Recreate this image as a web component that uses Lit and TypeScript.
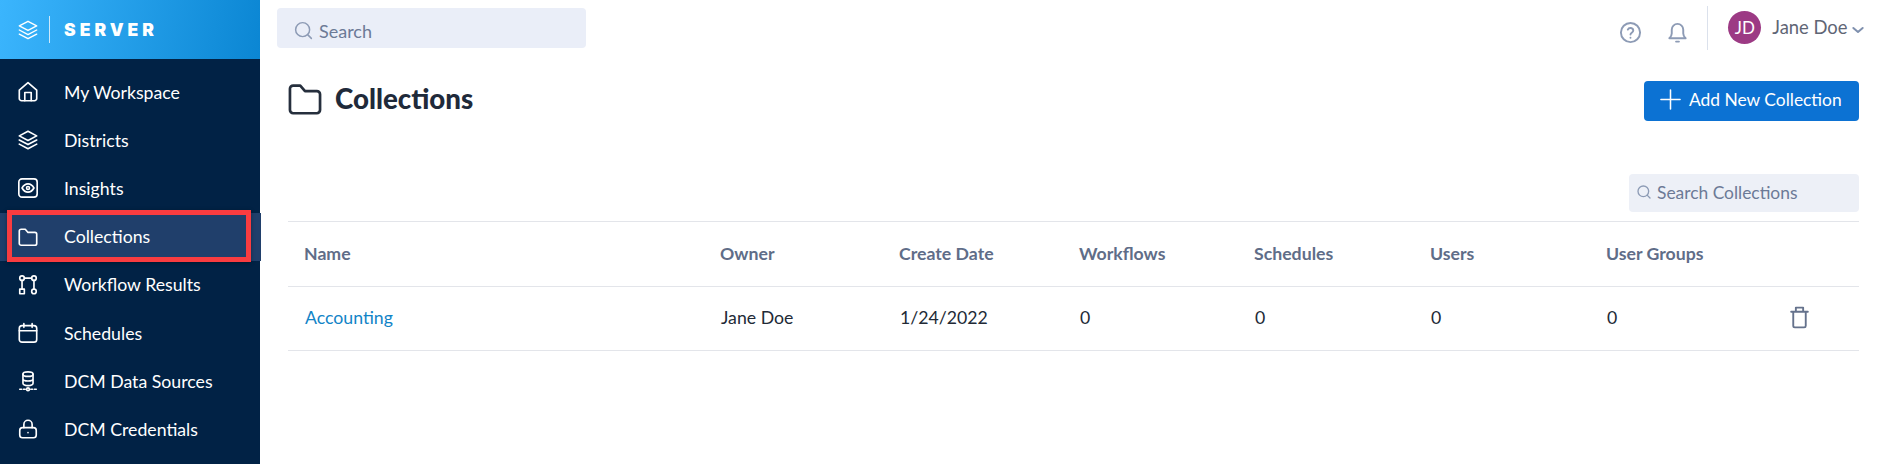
import { LitElement, html, css, svg } from 'lit';
import { customElement } from 'lit/decorators.js';

const icon = (body: unknown, size = 20, sw = 1.7) => html`<svg
  width=${size} height=${size} viewBox="0 0 24 24" fill="none" stroke="currentColor"
  stroke-width=${sw} stroke-linecap="round" stroke-linejoin="round">${body}</svg>`;

const layers = svg`<path d="M12 2.500l9.500 5-9.500 5-9.500-5z"/><path d="M2.500 12l9.500 5 9.500-5"/><path d="M2.500 16.500l9.500 5 9.500-5"/>`;
const folder = svg`<path d="M2.500 5.500a2 2 0 0 1 2-2h4.500l3 3.500h7.500a2 2 0 0 1 2 2v10a2 2 0 0 1-2 2h-15a2 2 0 0 1-2-2z"/>`;
const search = svg`<circle cx="11" cy="11" r="8"/><path d="M21 21l-4.300-4.300"/>`;

const NAV = [
  { label: 'My Workspace', icon: svg`<path d="M2.500 10L12 1.800l9.500 8.200v9a2.500 2.500 0 0 1-2.500 2.500H5A2.500 2.500 0 0 1 2.500 19z"/><path d="M8.500 21.500V12.500h7v9"/>` },
  { label: 'Districts', icon: layers },
  { label: 'Insights', icon: svg`<rect x="2" y="2" width="20" height="20" rx="3.500"/><path d="M5.500 12s2.500-4.500 6.500-4.500 6.500 4.500 6.500 4.500-2.500 4.500-6.500 4.500-6.500-4.500-6.500-4.500z"/><circle cx="12" cy="12" r="1.600"/>` },
  { label: 'Collections', icon: folder, active: true },
  { label: 'Workflow Results', icon: svg`<circle cx="5.500" cy="4.500" r="2.500"/><circle cx="18.500" cy="4.500" r="2.500"/><circle cx="18.500" cy="19" r="2.500"/><rect x="3" y="16.500" width="5" height="5"/><path d="M8 4.500h8M5.500 7v9.500M18.500 7v9.500"/>` },
  { label: 'Schedules', icon: svg`<rect x="2.500" y="4" width="19" height="18" rx="3"/><path d="M2.500 9.500h19M7.500 1.800v4M16.500 1.800v4"/>` },
  { label: 'DCM Data Sources', icon: svg`<ellipse cx="12" cy="4.500" rx="5.500" ry="2.500"/><path d="M6.500 4.500v10c0 1.400 2.500 2.500 5.500 2.500s5.500-1.100 5.500-2.500v-10M6.500 9.500c0 1.400 2.500 2.500 5.500 2.500s5.500-1.100 5.500-2.500"/><circle cx="12" cy="21" r="1.500"/><path d="M3 21h6M15 21h6" stroke-dasharray="2 2"/>` },
  { label: 'DCM Credentials', icon: svg`<rect x="3" y="10.500" width="18" height="11" rx="3"/><path d="M7.500 10.500V7a4.500 4.500 0 0 1 9 0v3.500"/><path d="M12 16v.01"/>` },
];

const COLUMNS = ['Name', 'Owner', 'Create Date', 'Workflows', 'Schedules', 'Users', 'User Groups'];

@customElement('app-root')
export class AppRoot extends LitElement {
  static styles = css`
    :host {
      display: flex;
      height: 464px;
      overflow: hidden;
      background: #fff;
      font-family: Lato, "Liberation Sans", sans-serif;
      position: relative;
    }
    svg { display: block; flex: none; }
    .side { width: 260px; flex: none; background: #012245; color: #fff; }
    .brand {
      height: 59px;
      display: flex;
      align-items: center;
      padding-left: 17px;
      background: linear-gradient(100deg, #3bb5fd 0%, #0b86d3 100%);
    }
    .brand-line { width: 1px; height: 27px; background: #cde9fb; margin: 0 14px 0 10px; }
    .brand-name {
      font-family: Inter, sans-serif;
      font-weight: 900;
      font-size: 17.500px;
      letter-spacing: 4px;
    }
    .nav { padding-top: 9px; }
    .item {
      height: 48.200px;
      display: flex;
      align-items: center;
      gap: 25px;
      padding-left: 17px;
      font-size: 17.700px;
    }
    .item.active { background: #203f6b; width: 261px; box-sizing: border-box; }
    .mark {
      position: absolute;
      left: 7px;
      top: 210px;
      width: 244px;
      height: 52px;
      box-sizing: border-box;
      border: 5px solid #f93c40;
      box-shadow: 0 1px 4px rgba(0, 0, 0, .35);
    }
    .main { flex: 1; min-width: 0; }
    .top {
      height: 56px;
      display: flex;
      align-items: center;
      padding-left: 17px;
      color: #8d9bb5;
    }
    .search {
      width: 309px;
      height: 40px;
      box-sizing: border-box;
      display: flex;
      align-items: center;
      gap: 5px;
      padding: 5px 0 0 16px;
      background: #eaeef8;
      border-radius: 4px;
      color: #6c7a96;
      font-size: 18px;
    }
    .search svg { color: #8d9bb5; margin-top: -1px; }
    .top-right {
      margin-left: auto;
      display: flex;
      align-items: center;
      padding-right: 15px;
    }
    .help { margin-top: 9px; }
    .bell { margin: 9px 0 0 24px; }
    .divider { width: 1px; height: 44px; background: #dbe1ec; margin: 0 20px 0 18px; }
    .avatar {
      width: 33px;
      height: 33px;
      border-radius: 50%;
      background: #9c3a84;
      color: #fff;
      font-size: 17px;
      display: flex;
      align-items: center;
      justify-content: center;
      margin-top: -2px;
    }
    .user { margin: -2px 0 0 11px; color: #5f6675; font-size: 18.400px; white-space: nowrap; }
    .chev { margin: 4px 0 0 2.500px; color: #7f90ae; }
    .body { padding: 25px 22px 0 28px; }
    .title-row { display: flex; align-items: center; height: 40px; }
    .title-icon { color: #262f3d; margin: -5px 0 0 -2px; }
    h1 {
      margin: -5px 0 0 11px;
      font-size: 27.700px;
      font-weight: 900;
      color: #1f2a3a;
    }
    .add {
      margin-left: auto;
      width: 215px;
      height: 40px;
      display: flex;
      align-items: center;
      gap: 7px;
      padding: 0 0 3px 15px;
      box-sizing: border-box;
      background: #0c72d3;
      color: #fff;
      border-radius: 4px;
      font-size: 17.400px;
    }
    .filter { display: flex; justify-content: flex-end; margin-top: 53px; }
    .filter div {
      width: 230px;
      height: 38px;
      box-sizing: border-box;
      display: flex;
      align-items: center;
      gap: 5px;
      padding: 0 0 2px 7px;
      background: #edf0f7;
      border-radius: 4px;
      color: #6c7a96;
      font-size: 17.400px;
    }
    .filter svg { color: #8d9bb5; }
    .row {
      display: grid;
      grid-template-columns: 416px 179px 180px 175px 176px 176px 183px 1fr;
      align-items: center;
      padding: 0 0 2px 16px;
      box-sizing: border-box;
      border-bottom: 1px solid #e3e5ea;
      height: 64px;
      font-size: 17.700px;
      color: #222a36;
    }
    .row.head {
      margin-top: 9px;
      border-top: 1px solid #e3e5ea;
      height: 66px;
      color: #5f6d88;
      font-weight: 700;
    }
    .link { color: #1284c7; padding-left: 1px; }
    .cell { padding-left: 1px; }
    .trash { color: #65728c; margin-left: -2px; }
  `;

  render() {
    return html`
      <aside class="side">
        <div class="brand">
          ${icon(layers, 22, 1.500)}
          <span class="brand-line"></span>
          <span class="brand-name">SERVER</span>
        </div>
        <nav class="nav">
          ${NAV.map(n => html`
            <div class="item ${n.active ? 'active' : ''}">
              ${icon(n.icon, 22, 1.800)}
              <span>${n.label}</span>
            </div>`)}
        </nav>
      </aside>
      <div class="mark"></div>
      <main class="main">
        <header class="top">
          <div class="search">${icon(search, 21)}<span>Search</span></div>
          <div class="top-right">
            <span class="help">${icon(svg`<circle cx="12" cy="12" r="10"/><path d="M9.200 9a3 3 0 0 1 5.700 1c0 2-2.900 2.500-2.900 4"/><path d="M12 17.500v.01"/>`, 23, 2)}</span>
            <span class="bell">${icon(svg`<path d="M3.500 18c1.500-1.500 2.500-3 2.500-5V9a6 6 0 0 1 12 0v4c0 2 1 3.500 2.500 5z"/><path d="M10.500 21.500h3"/>`, 23, 2)}</span>
            <span class="divider"></span>
            <span class="avatar">JD</span>
            <span class="user">Jane Doe</span>
            <span class="chev">${icon(svg`<path d="M5 9l7 6 7-6"/>`, 16, 3)}</span>
          </div>
        </header>
        <section class="body">
          <div class="title-row">
            <span class="title-icon">${icon(folder, 38, 1.700)}</span>
            <h1>Collections</h1>
            <div class="add">${icon(svg`<path d="M12 2v20M2 12h20"/>`, 23, 1.600)}<span>Add New Collection</span></div>
          </div>
          <div class="filter"><div>${icon(search, 16, 2)}<span>Search Collections</span></div></div>
          <div class="row head">${COLUMNS.map(c => html`<span>${c}</span>`)}</div>
          <div class="row">
            <span class="link">Accounting</span>
            <span class="cell">Jane Doe</span>
            <span class="cell">1/24/2022</span>
            <span class="cell">0</span><span class="cell">0</span><span class="cell">0</span><span class="cell">0</span>
            <span class="trash">${icon(svg`<path d="M4 6.500h16M8.500 6.500V2.500h7v4M6 6.500V20a1.500 1.500 0 0 0 1.500 1.500h9A1.500 1.500 0 0 0 18 20V6.500"/>`, 25, 1.800)}</span>
          </div>
        </section>
      </main>
    `;
  }
}
